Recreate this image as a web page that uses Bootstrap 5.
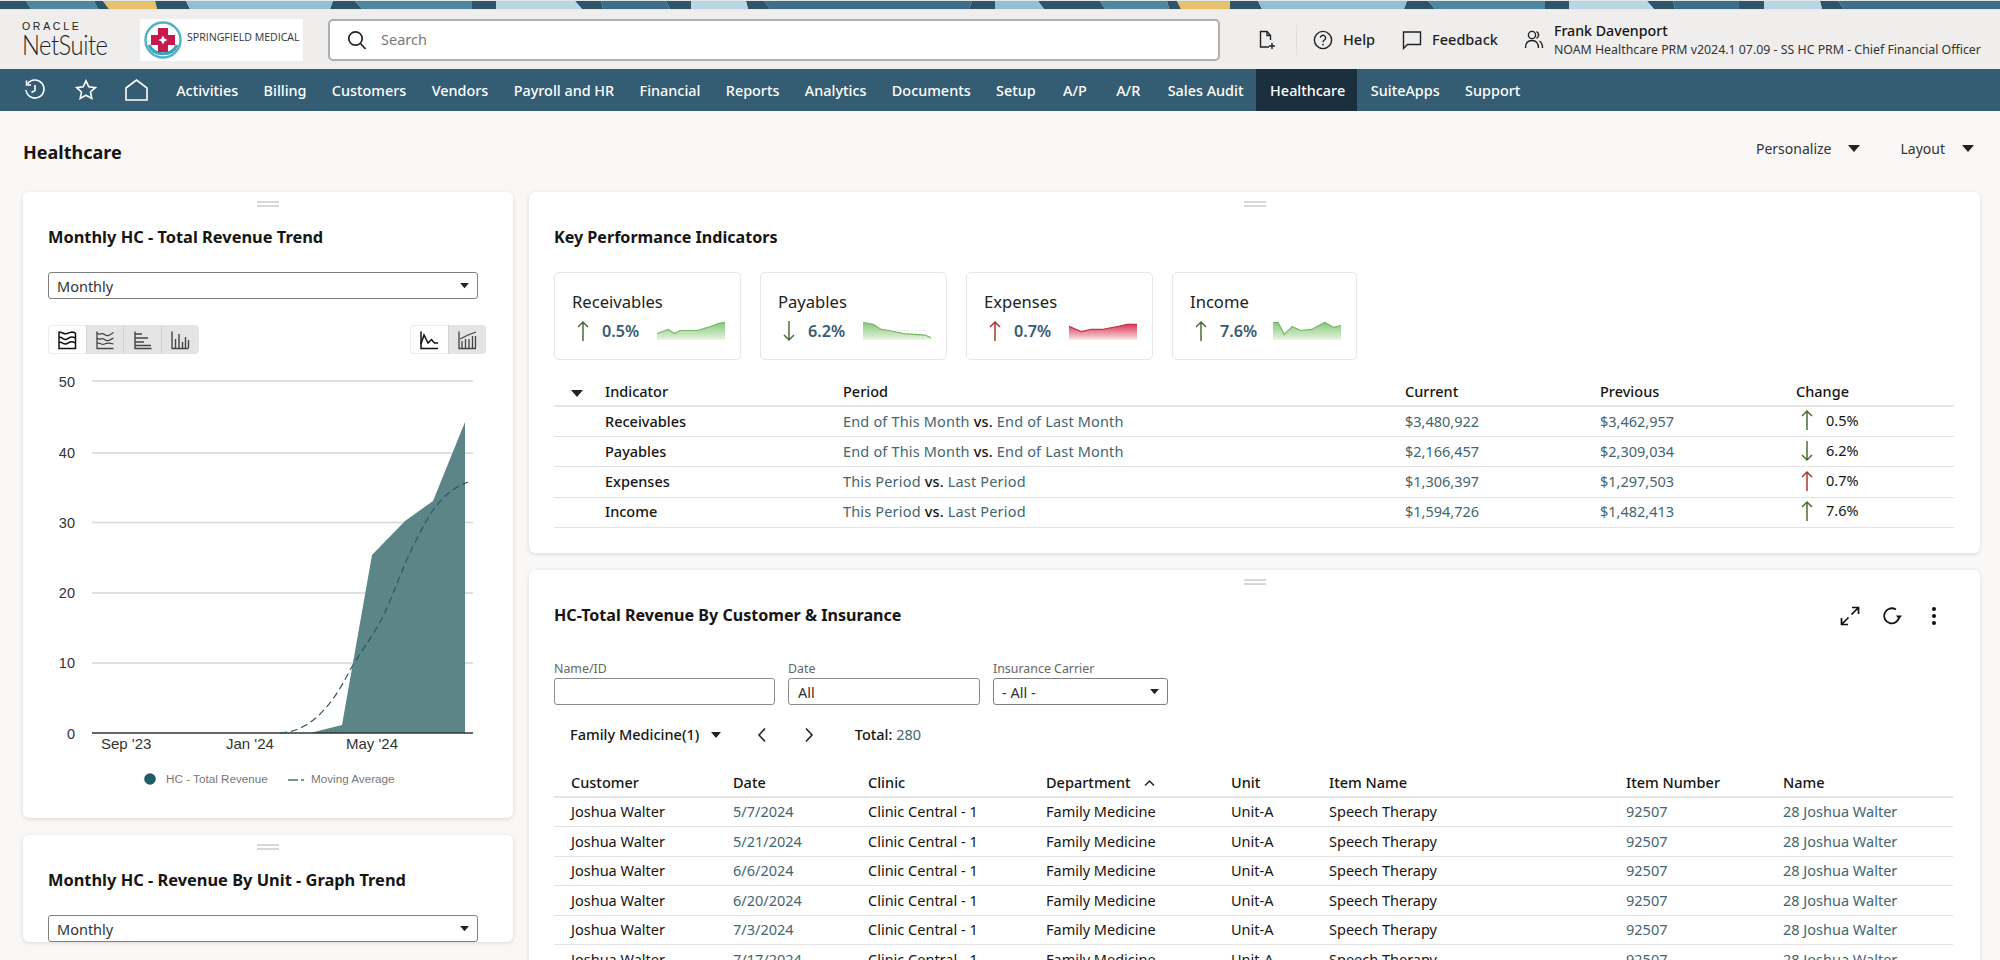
<!DOCTYPE html>
<html lang="en">
<head>
<meta charset="utf-8">
<title>Healthcare - NetSuite</title>
<link href="https://cdn.jsdelivr.net/npm/bootstrap@5.3.0/dist/css/bootstrap.min.css" rel="stylesheet">
<style>
html,body{height:960px;overflow:hidden}
body{background:#f9f8f6;color:#161513;font-family:"Noto Sans","Open Sans",sans-serif;font-size:14.5px}
.ns-stripe{display:block;width:2000px;height:10px}
.ns-head{height:59px;background:#efeeed;padding-left:22px;padding-right:19px}
.ns-logo{width:118px}
.ns-oracle{font:400 10.5px/9px "Liberation Sans",sans-serif;letter-spacing:2.7px;color:#222}
.ns-suite{font:300 27px/25px Lato,"Liberation Sans",sans-serif;letter-spacing:-.55px;color:#222;margin-top:1px;transform:scaleX(.88);transform-origin:left center;white-space:nowrap}
.ns-brand{width:163px;height:42px;background:#fff;gap:5px;padding-left:4px}
.ns-brandtxt{font-family:"Open Sans",sans-serif;font-size:10.6px;color:#333;white-space:nowrap;margin-bottom:3px}
.ns-search{width:892px;height:42px;margin-left:25px;background:#fff;border:2px solid #b0afad;border-radius:5px;padding-left:17px;gap:14px}
.ns-search input{border:0;outline:0;background:transparent;font-size:14.5px;width:600px;color:#444;padding:0}
.ns-search input::placeholder{color:#7a7a7a}
.ns-tools{margin-left:37px}
.ns-sep{width:1px;height:30px;background:#dfdedc;margin:0 16px 0 19px}
.ns-tool{font-size:14.5px;font-weight:500;color:#222;white-space:nowrap;margin-left:10px}
.ns-gap-a{margin-left:27px}
.ns-gap-b{margin-left:26px}
.ns-user{line-height:1.2;margin-left:10px}
.ns-uname{font-size:14.2px;font-weight:500;margin-bottom:4px}
.ns-usub{font-size:12.35px;white-space:nowrap;color:#333}
.ns-nav{height:42px;background:#345d73;padding-left:24px}
.ns-navicons{gap:28.5px;margin-right:15.5px}
.ns-link{color:#fff;font-size:14.4px;font-weight:500;padding:0 12.7px;height:42px;line-height:44px;text-decoration:none;white-space:nowrap}
.ns-link.ns-wide{padding:0 14.7px}
.ns-link.ns-pre{padding-right:11.7px}
.ns-link.active-tab{background:#1b2f3f;padding:0 12px 0 14px;margin:0 1px}
.ns-phead{height:81px;padding:0 26px 0 23px}
.ns-ptitle{font-size:18px;font-weight:700;margin:2px 0 0}
.ns-pmenu{font-size:14px;color:#333;margin-left:40px;margin-bottom:7px;gap:17px}
.tri{display:inline-block;width:0;height:0;border-left:6px solid transparent;border-right:6px solid transparent;border-top:7px solid #222}
.ns-body{padding:0 20px 0 23px;gap:16px}
.ns-leftcol{width:490px;gap:17px;flex:none}
.ns-rightcol{flex:1;gap:17px;min-width:0}
.ns-card{border:0;border-radius:6px;box-shadow:0 1px 4px rgba(0,0,0,.13);background:#fff;padding:9px 25px 0}
.ns-card.first-left{height:626px;padding-bottom:18px}
.ns-card.first-right{height:361px}
.ns-grip{width:22px;height:6px;border-top:2px solid #d8d8d8;border-bottom:2px solid #d8d8d8;margin:0 auto;display:block}
.ns-ctitle{font-size:16.4px;font-weight:700;line-height:24px;margin:18px 0 0;white-space:nowrap}
.ns-rightcol .ns-ctitle{font-size:16.1px}
.ns-select.form-select{height:27px;width:430px;padding:0 24px 0 8px;font-size:14.5px;line-height:24px;border:1px solid #7f7f7f;border-radius:3px;color:#333;margin-top:23px;background-image:url("data:image/svg+xml,%3Csvg xmlns='http://www.w3.org/2000/svg' viewBox='0 0 12 8'%3E%3Cpath d='M1 1h10L6 7z' fill='%23222'/%3E%3C/svg%3E");background-size:11px 7px;background-position:right 7px center}
.ns-toolbar{width:438px;margin-top:26px}
.btn-group > .ns-tb{width:38.5px;height:29px;padding:0;background:#e4e4e4;border:0;border-radius:0;margin-left:0;display:flex;align-items:center;justify-content:center;flex:none}
.btn-group > .ns-tb + .ns-tb{border-left:1px solid #d3d3d3}
.btn-group > .ns-tb.on{background:#fff;box-shadow:inset 0 0 0 1px #ececec}
.btn-group > .ns-tb:first-child{border-radius:4px 0 0 4px}
.btn-group > .ns-tb:last-child{border-radius:0 4px 4px 0}
.ns-chart{display:block;width:490px;height:440px;margin:6px 0 0 -25px}
.ns-chart text{font-family:"Liberation Sans",Arial,sans-serif}
.ns-kpis{gap:19px;margin-top:23px}
.ns-kpi{width:187px;height:88px;border:1px solid #e6e6e6;border-radius:5px;padding:17px 15px 0 17px;background:#fff}
.ns-kpi:last-child{width:185px}
.ns-kpilabel{font-size:16.6px;line-height:24px;color:#222}
.ns-kpirow{margin-top:5px}
.ns-kpiarrow{margin-left:4px}
.ns-kpival{font-size:16.2px;font-weight:600;color:#355c70;margin-left:12px;white-space:nowrap}
.ns-tbl{table-layout:fixed;width:1400px;margin:0;--bs-table-color:#161513;--bs-border-color:#e3e3e3}
.ns-tbl th,.ns-tbl td{padding:0;vertical-align:middle;white-space:nowrap;font-weight:400;overflow:hidden}
.ns-tbl thead th{font-weight:500;border-bottom:2px solid #e6e6e6}
.ns-kt{margin-top:18px;font-size:14.5px}
.ns-kt thead th{height:28px}
.ns-kt tbody td{height:30.4px}
.ns-kt .rname{font-weight:500}
.ns-link2{color:#43666f;text-decoration:none}
.ns-period{letter-spacing:.17px}
.ns-vs{font-weight:500}
.ns-dt thead th{height:28px}
.ns-dt tbody td{height:29.6px}
.ns-dt{margin-top:21px;font-size:14.5px;width:1399px}
.pl-17{padding-left:17px !important}
.ns-actions{gap:22px;margin:19px 11px 0 0}
.ns-flbl{font-size:12.4px;color:#666;line-height:14px;margin-bottom:2px}
.ns-filters{margin-top:35px;gap:13px}
.ns-in.form-control{height:27px;border:1px solid #8b8b8b;border-radius:3px;padding:0 9px;font-size:14.5px;color:#333}
.w-name{width:221px}.w-date{width:192px}.w-ins{width:175px}
.ns-pager{height:26px;margin-top:17px;padding-left:16px}
.ns-pager .pm{margin-right:11.5px;font-weight:500;white-space:nowrap}
.ns-pager .pb{margin-left:36.5px}
.ns-pager .tri{border-left-width:5.5px;border-right-width:5.5px;border-top-width:6.5px}
.ns-total{margin-left:41px;font-weight:500}
.ns-total a{font-weight:400}
.c-k0{width:51px}.c-k1{width:238px}.c-k2{width:562px}.c-k3{width:195px}.c-k4{width:196px}.c-k5{width:158px}
.c-d0{width:179px}.c-d1{width:135px}.c-d2{width:178px}.c-d3{width:185px}.c-d4{width:98px}.c-d5{width:297px}.c-d6{width:157px}.c-d7{width:170px}
.ns-chg{gap:12px;padding-left:4px;margin-top:-2px}
.ns-sort{margin-left:13px;vertical-align:1px}
</style>
</head>
<body>
<svg class="ns-stripe" viewBox="0 0 2000 10" preserveAspectRatio="none" aria-hidden="true">
<rect width="2000" height="10" fill="#dfe7ea"/>
<g fill="#2f5468">
<polygon points="0,1 26,1 31,9 0,9"/><polygon points="94,1 103,1 109,9 98,9"/><polygon points="155,1 186,1 190,9 157,9"/><polygon points="333,1 355,1 362,9 330,9"/><polygon points="472,1 496,1 496,9 472,9"/><polygon points="575,1 601,1 603,9 582,9"/><polygon points="666,1 691,1 691,9 670,9"/><polygon points="746,1 764,1 770,9 748,9"/><polygon points="972,1 995,1 995,9 969,9"/><polygon points="1038,1 1100,1 1105,9 1044,9"/><polygon points="1167,1 1177,1 1181,9 1169,9"/><polygon points="1230,1 1258,1 1262,9 1230,9"/><polygon points="1407,1 1428,1 1435,9 1404,9"/><polygon points="1545,1 1569,1 1569,9 1545,9"/><polygon points="1647,1 1673,1 1675,9 1654,9"/><polygon points="1739,1 1764,1 1764,9 1739,9"/><polygon points="1820,1 1838,1 1844,9 1822,9"/>
</g>
<g fill="#4f879e"><polygon points="26,1 94,1 98,9 31,9"/><polygon points="355,1 472,1 472,9 362,9"/><polygon points="1100,1 1167,1 1169,9 1105,9"/><polygon points="1428,1 1545,1 1545,9 1435,9"/></g>
<g fill="#3f6f88"><polygon points="601,1 666,1 670,9 603,9"/><polygon points="764,1 972,1 969,9 770,9"/><polygon points="1673,1 1739,1 1739,9 1675,9"/><polygon points="1838,1 2000,1 2000,9 1844,9"/></g>
<g fill="#e7c06c"><polygon points="103,1 155,1 157,9 109,9"/><polygon points="1177,1 1230,1 1230,9 1181,9"/></g>
<g fill="#95bed0"><polygon points="186,1 333,1 330,9 190,9"/><polygon points="995,1 1038,1 1044,9 995,9"/><polygon points="1258,1 1407,1 1404,9 1262,9"/></g>
<g fill="#b9d6e2"><polygon points="496,1 575,1 582,9 496,9"/><polygon points="691,1 746,1 748,9 691,9"/><polygon points="1569,1 1647,1 1654,9 1569,9"/><polygon points="1764,1 1820,1 1822,9 1764,9"/></g>
</svg>

<header class="ns-head d-flex align-items-center">
  <div class="ns-logo">
    <div class="ns-oracle">ORACLE</div>
    <div class="ns-suite">NetSuite</div>
  </div>
  <div class="ns-brand d-flex align-items-center">
    <svg width="38" height="38" viewBox="0 0 38 38" aria-hidden="true"><circle cx="19" cy="19" r="17.5" fill="#fff" stroke="#4fb3c4" stroke-width="2.4"/><path d="M5 24a15.500 15.500 0 0 0 28 0" fill="none" stroke="#3aa2b8" stroke-width="3"/><path d="M14 7h10v7h7v10h-7v7H14v-7H7V14h7z" fill="#c41a4f"/><path d="M19 14.500l1.500 3 3 1.500-3 1.500-1.500 3-1.500-3-3-1.500 3-1.500z" fill="#fff"/></svg>
    <span class="ns-brandtxt">SPRINGFIELD MEDICAL</span>
  </div>
  <div class="ns-search d-flex align-items-center">
    <svg width="20" height="20" viewBox="0 0 20 20" fill="none" stroke="#222" stroke-width="1.700" aria-hidden="true"><circle cx="8.500" cy="8.500" r="6.700"/><path d="M13.500 13.500l5 5.500"/></svg>
    <input type="text" placeholder="Search" aria-label="Search">
  </div>
  <div class="ns-tools d-flex align-items-center flex-grow-1">
    <svg width="20" height="20" viewBox="0 0 20 20" fill="none" stroke="#222" stroke-width="1.400" aria-hidden="true"><path d="M12 17H3.500V1.500H10l3.500 4V10"/><path d="M10 1.500V5.500h3.500"/><path d="M15 13v6M12 16h6"/></svg>
    <span class="ns-sep"></span>
    <svg width="20" height="20" viewBox="0 0 20 20" fill="none" stroke="#222" stroke-width="1.400" aria-hidden="true"><circle cx="10" cy="10" r="8.600"/><path d="M7.400 7.800a2.600 2.600 0 1 1 4 2.200c-1 .6-1.400 1.200-1.400 2.200"/><circle cx="10" cy="14.600" r=".9" fill="#222" stroke="none"/></svg>
    <span class="ns-tool">Help</span>
    <svg class="ns-gap-a" width="20" height="20" viewBox="0 0 20 20" fill="none" stroke="#222" stroke-width="1.400" aria-hidden="true"><path d="M1.500 2h17v12.500H5.500l-4 4z"/></svg>
    <span class="ns-tool">Feedback</span>
    <svg class="ns-gap-b" width="20" height="22" viewBox="0 0 20 22" fill="none" stroke="#222" stroke-width="1.400" aria-hidden="true"><circle cx="8" cy="6" r="3.600"/><path d="M1.500 19c0-5 2.400-7.500 6.500-7.500s6.500 2.500 6.500 7.500"/><path d="M12.500 2.700a3.600 3.600 0 0 1 0 6.600M15.500 12c1.800 1.200 3 3.400 3 7"/></svg>
    <div class="ns-user">
      <div class="ns-uname">Frank Davenport</div>
      <div class="ns-usub">NOAM Healthcare PRM v2024.1 07.09 - SS HC PRM - Chief Financial Officer</div>
    </div>
  </div>
</header>

<nav class="ns-nav d-flex align-items-center">
  <div class="ns-navicons d-flex align-items-center">
    <svg width="22" height="22" viewBox="0 0 22 22" fill="none" stroke="#fff" stroke-width="1.600" aria-hidden="true"><path d="M3.500 5A9 9 0 1 1 2 11"/><path d="M2.500 1.500V6H7"/><path d="M11 6v5.500l-3.500 2"/></svg>
    <svg width="22" height="22" viewBox="0 0 22 22" fill="none" stroke="#fff" stroke-width="1.600" aria-hidden="true"><path d="M11 1.800l2.800 6 6.500.8-4.800 4.400 1.300 6.500-5.800-3.300-5.800 3.300 1.300-6.500L1.700 8.600l6.500-.8z"/></svg>
    <svg width="23" height="22" viewBox="0 0 23 22" fill="none" stroke="#fff" stroke-width="1.600" aria-hidden="true"><path d="M1 21V9l10.500-8L22 9v12z"/></svg>
  </div>
  <a class="ns-link" href="#">Activities</a>
  <a class="ns-link" href="#">Billing</a>
  <a class="ns-link" href="#">Customers</a>
  <a class="ns-link" href="#">Vendors</a>
  <a class="ns-link" href="#">Payroll and HR</a>
  <a class="ns-link" href="#">Financial</a>
  <a class="ns-link" href="#">Reports</a>
  <a class="ns-link" href="#">Analytics</a>
  <a class="ns-link" href="#">Documents</a>
  <a class="ns-link" href="#">Setup</a>
  <a class="ns-link ns-wide" href="#">A/P</a>
  <a class="ns-link ns-wide" href="#">A/R</a>
  <a class="ns-link ns-pre" href="#">Sales Audit</a>
  <a class="ns-link active-tab" href="#">Healthcare</a>
  <a class="ns-link" href="#">SuiteApps</a>
  <a class="ns-link" href="#">Support</a>
</nav>

<div class="ns-phead d-flex align-items-center justify-content-between">
  <h1 class="ns-ptitle">Healthcare</h1>
  <div class="d-flex">
    <div class="ns-pmenu d-flex align-items-center">Personalize <span class="tri"></span></div>
    <div class="ns-pmenu d-flex align-items-center">Layout <span class="tri"></span></div>
  </div>
</div>

<main class="ns-body d-flex align-items-start">
  <div class="ns-leftcol d-flex flex-column">
    <section class="card ns-card first-left">
      <span class="ns-grip"></span>
      <h2 class="ns-ctitle">Monthly HC - Total Revenue Trend</h2>
      <select class="form-select ns-select" aria-label="Period"><option>Monthly</option></select>
      <div class="ns-toolbar d-flex justify-content-between">
        <div class="btn-group">
          <button class="btn ns-tb on" aria-label="Area"><svg width="20" height="20" viewBox="0 0 20 20" fill="none" stroke="#111" stroke-width="1.500"><path d="M2 1.500V18.500H18.500V3"/><path d="M2 2.500C5 1 6.500 5 10 3.500S15 1.500 18.500 3"/><path d="M2 7.500C5 6 6.500 11 10 9S15 6 18.500 8"/><path d="M2 12.500C5 11 6.500 15.500 10 13.500S15 11 18.500 13"/></svg></button>
          <button class="btn ns-tb" aria-label="Line"><svg width="20" height="20" viewBox="0 0 20 20" fill="none" stroke="#444" stroke-width="1.300"><path d="M2 1.500V18.500H18.500"/><path d="M2 3C5 6 6.500 2 9.500 4.500S15 5 18.500 2.500"/><path d="M2 8C5 11 6.500 7 9.500 9.500S15 10 18.500 8"/><path d="M2 13.500C5 12 6.500 15.500 9.500 14S15 13 18.500 14"/></svg></button>
          <button class="btn ns-tb" aria-label="Bar"><svg width="20" height="20" viewBox="0 0 20 20" fill="none" stroke="#444" stroke-width="1.400"><path d="M2 1.500V18.500H18.500"/><path d="M2 4H9M2 8H15M2 12H11M2 15.500H18"/></svg></button>
          <button class="btn ns-tb" aria-label="Column"><svg width="20" height="20" viewBox="0 0 20 20" fill="none" stroke="#444" stroke-width="1.400"><path d="M2 1.500V18.500H18.500"/><path d="M5.500 18V9M9 18V4M12.500 18V12M15.500 18V7M18.500 18V10"/></svg></button>
        </div>
        <div class="btn-group">
          <button class="btn ns-tb on" aria-label="Trend"><svg width="20" height="20" viewBox="0 0 20 20" fill="none" stroke="#111" stroke-width="1.500"><path d="M2 1.500V18.500H19"/><path d="M2 14L5 5l4 8 3.500-3.500 3 3.500H19"/></svg></button>
          <button class="btn ns-tb" aria-label="Combo"><svg width="20" height="20" viewBox="0 0 20 20" fill="none" stroke="#444" stroke-width="1.300"><path d="M2 1.500V18.500H19"/><path d="M5 18v-7M8.500 18v-9M12 18V9M15.500 18V6M18.500 18V6"/><path d="M3 9l8-4 8-3"/></svg></button>
        </div>
      </div>
      <svg class="ns-chart" viewBox="23 360 490 440" role="img" aria-label="Monthly total revenue chart">
        <g stroke="#d6d6d6" stroke-width="1.300">
          <path d="M92 381H473M92 453H473M92 522.500H473M92 593H473M92 663H473"/>
        </g>
        <path d="M285 733L310 733 342 725 372 555 405 521 433 501 465 422V733z" fill="#5c8588"/>
        <path d="M92 733H473" stroke="#333" stroke-width="1.500"/>
        <path d="M280 733C295 732 305 727 317 717 330 705 340 690 350 670 365 645 376 632 385 612 393 595 400 575 408 557 416 540 425 522 433 510 443 497 452 488 468 482" fill="none" stroke="#2d5a62" stroke-width="1.200" stroke-dasharray="7 4"/>
        <g font-size="14.500" fill="#333" text-anchor="end">
          <text x="75" y="387">50</text><text x="75" y="458">40</text><text x="75" y="528">30</text><text x="75" y="598">20</text><text x="75" y="668">10</text><text x="75" y="739">0</text>
        </g>
        <g font-size="15" fill="#333">
          <text x="101" y="749">Sep '23</text><text x="226" y="749">Jan '24</text><text x="346" y="749">May '24</text>
        </g>
        <circle cx="150" cy="779" r="5.800" fill="#1f5c66"/>
        <text x="166" y="783" font-size="11.700" fill="#777">HC - Total Revenue</text>
        <path d="M288 780H298M301 780H304" stroke="#4b6f75" stroke-width="1.300"/>
        <text x="311" y="783" font-size="11.700" fill="#777">Moving Average</text>
      </svg>
    </section>
    <section class="card ns-card">
      <span class="ns-grip"></span>
      <h2 class="ns-ctitle">Monthly HC - Revenue By Unit - Graph Trend</h2>
      <select class="form-select ns-select" aria-label="Period"><option>Monthly</option></select>
    </section>
  </div>

  <div class="ns-rightcol d-flex flex-column">
    <section class="card ns-card first-right">
      <span class="ns-grip"></span>
      <h2 class="ns-ctitle">Key Performance Indicators</h2>
      <div class="ns-kpis d-flex">
        <div class="ns-kpi">
          <div class="ns-kpilabel">Receivables</div>
          <div class="ns-kpirow d-flex align-items-center">
            <svg class="ns-kpiarrow" width="14" height="22" viewBox="0 0 14 22" fill="none" stroke="#4d6b35" stroke-width="1.500" aria-hidden="true"><path d="M7 21V2M2 7l5-5 5 5"/></svg>
            <span class="ns-kpival">0.5%</span>
            <svg class="ms-auto" width="68" height="18" viewBox="0 0 67 17" aria-hidden="true"><defs><linearGradient id="gG" x1="0" y1="0" x2="0" y2="1"><stop offset="0" stop-color="#87c878"/><stop offset="1" stop-color="#e3f2de"/></linearGradient><linearGradient id="gR" x1="0" y1="0" x2="0" y2="1"><stop offset="0" stop-color="#d83a55"/><stop offset="1" stop-color="#f8dfe3"/></linearGradient></defs><path d="M0 11L11 7 17 11 23 8 40 8 50 5 61 1 67 0V17H0z" fill="url(#gG)"/><path d="M0 11L11 7 17 11 23 8 40 8 50 5 61 1 67 0" fill="none" stroke="#77b867" stroke-width="1.200"/></svg>
          </div>
        </div>
        <div class="ns-kpi">
          <div class="ns-kpilabel">Payables</div>
          <div class="ns-kpirow d-flex align-items-center">
            <svg class="ns-kpiarrow" width="14" height="22" viewBox="0 0 14 22" fill="none" stroke="#4d6b35" stroke-width="1.500" aria-hidden="true"><path d="M7 1V20M2 15l5 5 5-5"/></svg>
            <span class="ns-kpival">6.2%</span>
            <svg class="ms-auto" width="68" height="18" viewBox="0 0 67 17" aria-hidden="true"><path d="M0 0L10 2 18 7 26 8 40 11 61 12.500 67 15V17H0z" fill="url(#gG)"/><path d="M0 0L10 2 18 7 26 8 40 11 61 12.500 67 15" fill="none" stroke="#77b867" stroke-width="1.200"/><path d="M35 8H63" stroke="#cfe5c8" stroke-width=".8" stroke-dasharray="2 2"/></svg>
          </div>
        </div>
        <div class="ns-kpi">
          <div class="ns-kpilabel">Expenses</div>
          <div class="ns-kpirow d-flex align-items-center">
            <svg class="ns-kpiarrow" width="14" height="22" viewBox="0 0 14 22" fill="none" stroke="#a83a2c" stroke-width="1.500" aria-hidden="true"><path d="M7 21V2M2 7l5-5 5 5"/></svg>
            <span class="ns-kpival">0.7%</span>
            <svg class="ms-auto" width="68" height="18" viewBox="0 0 67 17" aria-hidden="true"><path d="M0 4L12 9 22 7 32 7 49 4 57 2 67 2V17H0z" fill="url(#gR)"/><path d="M0 4L12 9 22 7 32 7 49 4 57 2 67 2" fill="none" stroke="#c92e4a" stroke-width="1.200"/></svg>
          </div>
        </div>
        <div class="ns-kpi">
          <div class="ns-kpilabel">Income</div>
          <div class="ns-kpirow d-flex align-items-center">
            <svg class="ns-kpiarrow" width="14" height="22" viewBox="0 0 14 22" fill="none" stroke="#4d6b35" stroke-width="1.500" aria-hidden="true"><path d="M7 21V2M2 7l5-5 5 5"/></svg>
            <span class="ns-kpival">7.6%</span>
            <svg class="ms-auto" width="68" height="18" viewBox="0 0 67 17" aria-hidden="true"><path d="M0 0L5 0 11 12 19 4 27 8 38 7 51 0 60 5 67 3V17H0z" fill="url(#gG)"/><path d="M0 0L5 0 11 12 19 4 27 8 38 7 51 0 60 5 67 3" fill="none" stroke="#77b867" stroke-width="1.200"/></svg>
          </div>
        </div>
      </div>
      <table class="table ns-tbl ns-kt">
        <colgroup><col class="c-k0"><col class="c-k1"><col class="c-k2"><col class="c-k3"><col class="c-k4"><col class="c-k5"></colgroup>
        <thead><tr><th class="pl-17"><span class="tri"></span></th><th>Indicator</th><th>Period</th><th>Current</th><th>Previous</th><th>Change</th></tr></thead>
        <tbody>
          <tr><td></td><td class="rname">Receivables</td><td class="ns-period"><a class="ns-link2" href="#">End of This Month</a> <span class="ns-vs">vs.</span> <a class="ns-link2" href="#">End of Last Month</a></td><td><a class="ns-link2" href="#">$3,480,922</a></td><td><a class="ns-link2" href="#">$3,462,957</a></td><td><span class="ns-chg d-flex align-items-center"><svg width="14" height="22" viewBox="0 0 14 22" fill="none" stroke="#4d6b35" stroke-width="1.500" aria-hidden="true"><path d="M7 21V2M2 7l5-5 5 5"/></svg>0.5%</span></td></tr>
          <tr><td></td><td class="rname">Payables</td><td class="ns-period"><a class="ns-link2" href="#">End of This Month</a> <span class="ns-vs">vs.</span> <a class="ns-link2" href="#">End of Last Month</a></td><td><a class="ns-link2" href="#">$2,166,457</a></td><td><a class="ns-link2" href="#">$2,309,034</a></td><td><span class="ns-chg d-flex align-items-center"><svg width="14" height="22" viewBox="0 0 14 22" fill="none" stroke="#4d6b35" stroke-width="1.500" aria-hidden="true"><path d="M7 1V20M2 15l5 5 5-5"/></svg>6.2%</span></td></tr>
          <tr><td></td><td class="rname">Expenses</td><td class="ns-period"><a class="ns-link2" href="#">This Period</a> <span class="ns-vs">vs.</span> <a class="ns-link2" href="#">Last Period</a></td><td><a class="ns-link2" href="#">$1,306,397</a></td><td><a class="ns-link2" href="#">$1,297,503</a></td><td><span class="ns-chg d-flex align-items-center"><svg width="14" height="22" viewBox="0 0 14 22" fill="none" stroke="#a83a2c" stroke-width="1.500" aria-hidden="true"><path d="M7 21V2M2 7l5-5 5 5"/></svg>0.7%</span></td></tr>
          <tr><td></td><td class="rname">Income</td><td class="ns-period"><a class="ns-link2" href="#">This Period</a> <span class="ns-vs">vs.</span> <a class="ns-link2" href="#">Last Period</a></td><td><a class="ns-link2" href="#">$1,594,726</a></td><td><a class="ns-link2" href="#">$1,482,413</a></td><td><span class="ns-chg d-flex align-items-center"><svg width="14" height="22" viewBox="0 0 14 22" fill="none" stroke="#4d6b35" stroke-width="1.500" aria-hidden="true"><path d="M7 21V2M2 7l5-5 5 5"/></svg>7.6%</span></td></tr>
        </tbody>
      </table>
    </section>

    <section class="card ns-card">
      <span class="ns-grip"></span>
      <div class="d-flex align-items-center justify-content-between">
        <h2 class="ns-ctitle">HC-Total Revenue By Customer &amp; Insurance</h2>
        <div class="ns-actions d-flex align-items-center">
          <svg width="20" height="20" viewBox="0 0 20 20" fill="none" stroke="#111" stroke-width="1.700" aria-hidden="true"><path d="M11.500 8.500L18.500 1.500M12 1.500h6.500V8M8.500 11.500L1.500 18.500M8 18.500H1.500V12"/></svg>
          <svg width="20" height="20" viewBox="0 0 18 18" fill="none" stroke="#111" stroke-width="1.600" aria-hidden="true"><path d="M15.500 9.500A6.800 6.800 0 1 1 12.500 3.200"/><path d="M12.500 8.500h5.500l-2.700 3.500z" fill="#111" stroke="none"/></svg>
          <svg width="20" height="20" viewBox="0 0 20 20" fill="#111" aria-hidden="true"><circle cx="10" cy="3" r="2"/><circle cx="10" cy="10" r="2"/><circle cx="10" cy="17" r="2"/></svg>
        </div>
      </div>
      <div class="ns-filters d-flex">
        <div class="w-name"><label class="ns-flbl d-block" for="f1">Name/ID</label><input id="f1" class="form-control ns-in" type="text"></div>
        <div class="w-date"><label class="ns-flbl d-block" for="f2">Date</label><input id="f2" class="form-control ns-in" type="text" value="All"></div>
        <div class="w-ins"><label class="ns-flbl d-block" for="f3">Insurance Carrier</label><select id="f3" class="form-select ns-select mt-0 w-100"><option>- All -</option></select></div>
      </div>
      <div class="ns-pager d-flex align-items-center">
        <span class="pm">Family Medicine(1)</span><span class="tri"></span>
        <svg class="pb" width="10" height="16" viewBox="0 0 10 16" fill="none" stroke="#222" stroke-width="1.600" aria-hidden="true"><path d="M8 1.500L2 8l6 6.500"/></svg>
        <svg class="pb" width="10" height="16" viewBox="0 0 10 16" fill="none" stroke="#222" stroke-width="1.600" aria-hidden="true"><path d="M2 1.500L8 8l-6 6.500"/></svg>
        <span class="ns-total">Total: <a class="ns-link2" href="#">280</a></span>
      </div>
      <table class="table ns-tbl ns-dt">
        <colgroup><col class="c-d0"><col class="c-d1"><col class="c-d2"><col class="c-d3"><col class="c-d4"><col class="c-d5"><col class="c-d6"><col class="c-d7"></colgroup>
        <thead><tr><th class="pl-17">Customer</th><th>Date</th><th>Clinic</th><th>Department<svg class="ns-sort" width="11" height="8" viewBox="0 0 11 8" fill="none" stroke="#222" stroke-width="1.500" aria-hidden="true"><path d="M1 6.500L5.500 2 10 6.500"/></svg></th><th>Unit</th><th>Item Name</th><th>Item Number</th><th>Name</th></tr></thead>
        <tbody>
          <tr><td class="pl-17">Joshua Walter</td><td><a class="ns-link2" href="#">5/7/2024</a></td><td>Clinic Central - 1</td><td>Family Medicine</td><td>Unit-A</td><td>Speech Therapy</td><td><a class="ns-link2" href="#">92507</a></td><td><a class="ns-link2" href="#">28 Joshua Walter</a></td></tr>
          <tr><td class="pl-17">Joshua Walter</td><td><a class="ns-link2" href="#">5/21/2024</a></td><td>Clinic Central - 1</td><td>Family Medicine</td><td>Unit-A</td><td>Speech Therapy</td><td><a class="ns-link2" href="#">92507</a></td><td><a class="ns-link2" href="#">28 Joshua Walter</a></td></tr>
          <tr><td class="pl-17">Joshua Walter</td><td><a class="ns-link2" href="#">6/6/2024</a></td><td>Clinic Central - 1</td><td>Family Medicine</td><td>Unit-A</td><td>Speech Therapy</td><td><a class="ns-link2" href="#">92507</a></td><td><a class="ns-link2" href="#">28 Joshua Walter</a></td></tr>
          <tr><td class="pl-17">Joshua Walter</td><td><a class="ns-link2" href="#">6/20/2024</a></td><td>Clinic Central - 1</td><td>Family Medicine</td><td>Unit-A</td><td>Speech Therapy</td><td><a class="ns-link2" href="#">92507</a></td><td><a class="ns-link2" href="#">28 Joshua Walter</a></td></tr>
          <tr><td class="pl-17">Joshua Walter</td><td><a class="ns-link2" href="#">7/3/2024</a></td><td>Clinic Central - 1</td><td>Family Medicine</td><td>Unit-A</td><td>Speech Therapy</td><td><a class="ns-link2" href="#">92507</a></td><td><a class="ns-link2" href="#">28 Joshua Walter</a></td></tr>
          <tr><td class="pl-17">Joshua Walter</td><td><a class="ns-link2" href="#">7/17/2024</a></td><td>Clinic Central - 1</td><td>Family Medicine</td><td>Unit-A</td><td>Speech Therapy</td><td><a class="ns-link2" href="#">92507</a></td><td><a class="ns-link2" href="#">28 Joshua Walter</a></td></tr>
        </tbody>
      </table>
    </section>
  </div>
</main>
<script src="https://cdn.jsdelivr.net/npm/bootstrap@5.3.0/dist/js/bootstrap.bundle.min.js"></script>
</body>
</html>
